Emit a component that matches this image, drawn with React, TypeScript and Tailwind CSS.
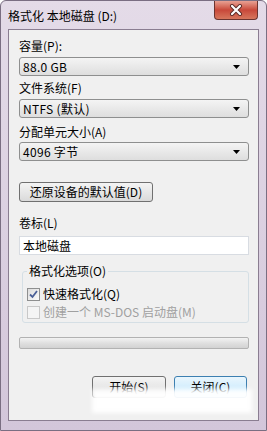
const font = "font-['Noto_Sans_CJK_SC','Noto_Sans',sans-serif]";

function Combo({ value }: { value: string }) {
  return (
    <div className="flex h-[19px] items-center justify-between rounded-[3px] border border-[#8e8f8f] bg-gradient-to-b from-[#f4f4f4] to-[#dedede] pl-[3px] pr-[8px]">
      <span className="text-[12px] leading-[14px] tracking-[0.3px] text-black">{value}</span>
      <svg width="7" height="4" viewBox="0 0 7 4">
        <path d="M0 0H7L3.5 4Z" fill="#000" />
      </svg>
    </div>
  );
}

function Check({ checked, disabled, label }: { checked?: boolean; disabled?: boolean; label: string }) {
  return (
    <div className="flex items-center gap-[3px]">
      <div
        className={`flex h-[13px] w-[13px] items-center justify-center border ${
          disabled ? "border-[#c8c8c8] bg-[#f4f4f4]" : "border-[#8e8f8f] bg-gradient-to-br from-[#dcdcdc] to-[#fbfbfb]"
        }`}
      >
        {checked && (
          <svg width="9" height="9" viewBox="0 0 9 9">
            <path d="M1 4.5L3.5 7L8 1" fill="none" stroke="#4a5f97" strokeWidth="1.8" />
          </svg>
        )}
      </div>
      <span className={`text-[12px] leading-[14px] ${disabled ? "text-[#a0a0a0]" : "text-black"}`}>{label}</span>
    </div>
  );
}

export default function App() {
  return (
    <div className={`relative h-[431px] w-[267px] overflow-hidden ${font}`}>
      <div className="flex h-full w-full flex-col rounded-t-[6px] border border-[#7a6e82] bg-gradient-to-b from-[#e4dbe8] to-[#d3c6da]">
        {/* title bar */}
        <div className="flex h-[28px] shrink-0 items-start justify-between pl-[7px]">
          <span className="mt-[8px] text-[12px] leading-[14px] text-black">格式化 本地磁盘 (D:)</span>
          <div className="mr-[8px] flex h-[19px] w-[44px] items-center justify-center rounded-b-[4px] border border-t-0 border-[#6b3430] bg-gradient-to-b from-[#e8a093] via-[#c8483a] to-[#d6765d]">
            <svg width="14" height="12" viewBox="0 0 14 12">
              <path d="M3 2L11 10M11 2L3 10" stroke="#5a2a26" strokeWidth="4" strokeLinecap="round" />
              <path d="M3 2L11 10M11 2L3 10" stroke="#fff" strokeWidth="2.2" strokeLinecap="round" />
            </svg>
          </div>
        </div>

        {/* client area */}
        <div className="mx-[7px] mb-[9px] flex flex-1 flex-col border border-[#8a7d91] bg-[#f0f0f0] pl-[10px] pr-[9px] pt-[9px]">
          <span className="text-[12px] leading-[14px] text-black">容量(P):</span>
          <div className="mt-[4px]">
            <Combo value="88.0 GB" />
          </div>

          <span className="mt-[5px] text-[12px] leading-[14px] text-black">文件系统(F)</span>
          <div className="mt-[4px]">
            <Combo value="NTFS (默认)" />
          </div>

          <span className="mt-[7px] text-[12px] leading-[14px] text-black">分配单元大小(A)</span>
          <div className="mt-[3px]">
            <Combo value="4096 字节" />
          </div>

          <button className="mt-[21px] flex h-[20px] w-[134px] items-center justify-center rounded-[3px] border border-[#707070] bg-gradient-to-b from-[#f4f4f4] to-[#dadada] text-[12px] leading-[14px] text-black">
            还原设备的默认值(D)
          </button>

          <span className="mt-[14px] text-[12px] leading-[14px] text-black">卷标(L)</span>
          <div className="mt-[6px] flex h-[19px] items-center border border-[#d8dce2] bg-white pl-[3px] text-[12px] leading-[14px] text-black">
            本地磁盘
          </div>

          {/* group box */}
          <div className="relative ml-[3px] mt-[16px] h-[52px] rounded-[3px] border border-[#d5dfe5] px-[4px] pt-[15px]">
            <span className="absolute left-[4px] top-[-8px] bg-[#f0f0f0] px-[2px] text-[12px] leading-[14px] text-black">
              格式化选项(O)
            </span>
            <div className="flex flex-col gap-[4px]">
              <Check checked label="快速格式化(Q)" />
              <Check disabled label="创建一个 MS-DOS 启动盘(M)" />
            </div>
          </div>

          <div className="mt-[14px] h-[12px] rounded-[2px] border border-[#b2b2b2] bg-gradient-to-b from-[#f3f3f3] via-[#e0e0e0] to-[#d2d2d2]" />

          <div className="mt-[27px] flex justify-end gap-[8px] pr-[2px]">
            <button className="flex h-[22px] w-[74px] items-center justify-center rounded-[3px] border border-[#707070] bg-gradient-to-b from-[#f4f4f4] to-[#dadada] text-[12px] leading-[14px] text-black">
              开始(S)
            </button>
            <button className="flex h-[22px] w-[73px] items-center justify-center rounded-[3px] border border-[#3c7fb1] bg-gradient-to-b from-[#eaf6fd] to-[#bee6fd] text-[12px] leading-[14px] text-black">
              关闭(C)
            </button>
          </div>
        </div>
      </div>

      {/* watermark smudge */}
      <div className="pointer-events-none absolute left-[92px] top-[389px] h-[24px] w-[160px] bg-white/95 blur-[2px]" />
    </div>
  );
}
